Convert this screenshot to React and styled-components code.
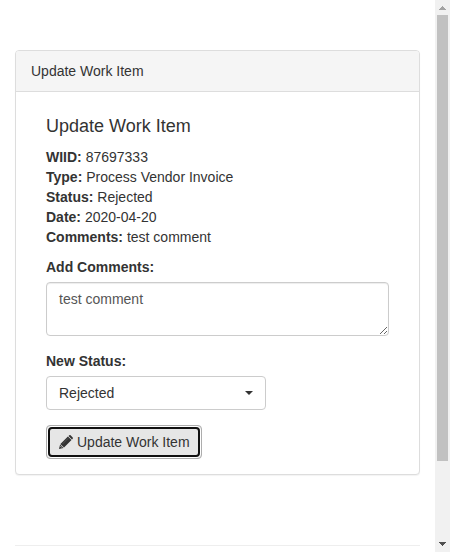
import React from "react";
import styled, { createGlobalStyle } from "styled-components";

const GlobalStyle = createGlobalStyle`
  * { box-sizing: border-box; }
  html, body { margin: 0; background: #fff; overflow: hidden; }
  body, textarea, button {
    font-family: "Liberation Sans", Arial, sans-serif;
    font-size: 14px;
    line-height: 20px;
    color: #333;
  }
`;
const Page = styled.div`
  display: flex;
  height: 552px;
  width: 450px;
  overflow: hidden;
`;
const Content = styled.main`
  flex: 1;
  min-width: 0;
  padding: 50px 15px 0;
`;
const Panel = styled.section`
  background: #fff;
  border: 1px solid #ddd;
  border-radius: 4px;
  box-shadow: 0 1px 1px rgba(0, 0, 0, 0.05);
`;
const PanelHeading = styled.header`
  padding: 10px 15px;
  background: #f5f5f5;
  border-bottom: 1px solid #ddd;
  border-radius: 3px 3px 0 0;
`;
const PanelBody = styled.div`
  padding: 25px 30px 15px;
`;
const Title = styled.h4`
  margin: 0 0 11px;
  font-size: 18px;
  font-weight: 500;
  line-height: 19px;
`;
const Details = styled.div`
  margin-bottom: 10px;
`;
const Label = styled.label`
  display: block;
  margin-bottom: 5px;
  font-weight: 700;
`;
const Comments = styled.textarea`
  display: block;
  width: 100%;
  height: 54px;
  margin: 0 0 15px;
  padding: 6px 12px;
  color: #555;
  background: #fff;
  border: 1px solid #ccc;
  border-radius: 4px;
  box-shadow: inset 0 1px 1px rgba(0, 0, 0, 0.075);
  outline: none;
  overflow: auto;
`;
const Select = styled.button`
  display: flex;
  align-items: center;
  justify-content: space-between;
  width: 220px;
  height: 34px;
  margin: 0 0 15px;
  padding: 6px 12px;
  background: #fff;
  border: 1px solid #ccc;
  border-radius: 4px;
`;
const Caret = styled.span`
  border-top: 4px solid #333;
  border-left: 4px solid transparent;
  border-right: 4px solid transparent;
`;
const SubmitButton = styled.button`
  position: relative;
  display: flex;
  align-items: center;
  width: 156px;
  height: 34px;
  margin: 0;
  padding: 6px 12px;
  white-space: nowrap;
  background: #e6e6e6;
  border: 1px solid #adadad;
  border-radius: 4px;

  &::after {
    content: "";
    position: absolute;
    inset: 1px;
    border: 2px solid #101010;
    border-radius: 4px;
    box-shadow: 0 0 0 1px #fff;
  }
`;
const PencilIcon = styled.svg`
  flex: none;
  width: 14px;
  height: 14px;
  margin-right: 4px;
  fill: #333;
`;
const Divider = styled.hr`
  margin: 70px 0 0;
  border: 0;
  border-top: 1px solid #eee;
`;
const Scrollbar = styled.div`
  display: flex;
  flex-direction: column;
  align-items: center;
  width: 15px;
  background: #f1f1f1;
`;
const ScrollArrow = styled.svg`
  width: 15px;
  height: 15px;
  flex: none;
  fill: ${(p) => p.$color};
`;
const Track = styled.div`
  flex: 1;
  width: 11px;
`;
const Thumb = styled.div`
  height: 446px;
  background: #c1c1c1;
`;

const details = [
  ["WIID:", "87697333"],
  ["Type:", "Process Vendor Invoice"],
  ["Status:", "Rejected"],
  ["Date:", "2020-04-20"],
  ["Comments:", "test comment"],
];

export default function App() {
  return (
    <Page>
      <GlobalStyle />
      <Content>
        <Panel>
          <PanelHeading>Update Work Item</PanelHeading>
          <PanelBody>
            <Title>Update Work Item</Title>
            <Details>
              {details.map(([name, value]) => (
                <div key={name}>
                  <b>{name}</b> {value}
                </div>
              ))}
            </Details>
            <Label htmlFor="comments">Add Comments:</Label>
            <Comments id="comments" defaultValue="test comment" />
            <Label as="div">New Status:</Label>
            <Select type="button">
              Rejected
              <Caret />
            </Select>
            <SubmitButton type="button">
              <PencilIcon viewBox="0 0 14 14" aria-hidden="true">
                <path d="M9.500 1 10.300.3q.7-.5 1.300 0l2.100 2.100q.5.600 0 1.300L13 4.500zM8.900 1.500 12.500 5.100 5 12.600 1.400 9zM1.100 9.500 4.500 12.900 0 14z" />
                <path d="M9.200 3.300 3.500 9" fill="none" stroke="#777" strokeWidth=".5" />
                <path d="M1.500 11.300 2.700 12.500" fill="none" stroke="#e6e6e6" strokeWidth=".8" />
              </PencilIcon>
              Update Work Item
            </SubmitButton>
          </PanelBody>
        </Panel>
        <Divider />
      </Content>
      <Scrollbar>
        <ScrollArrow viewBox="0 0 15 15" $color="#a3a3a3" shapeRendering="crispEdges">
          <path d="M7 6h1v1h1v1h1v1h1v1H4V9h1V8h1V7h1z" />
        </ScrollArrow>
        <Track>
          <Thumb />
        </Track>
        <ScrollArrow viewBox="0 0 15 15" $color="#505050" shapeRendering="crispEdges">
          <path d="M4 5h7v1h-1v1H9v1H8v1H7V8H6V7H5V6H4z" />
        </ScrollArrow>
      </Scrollbar>
    </Page>
  );
}
